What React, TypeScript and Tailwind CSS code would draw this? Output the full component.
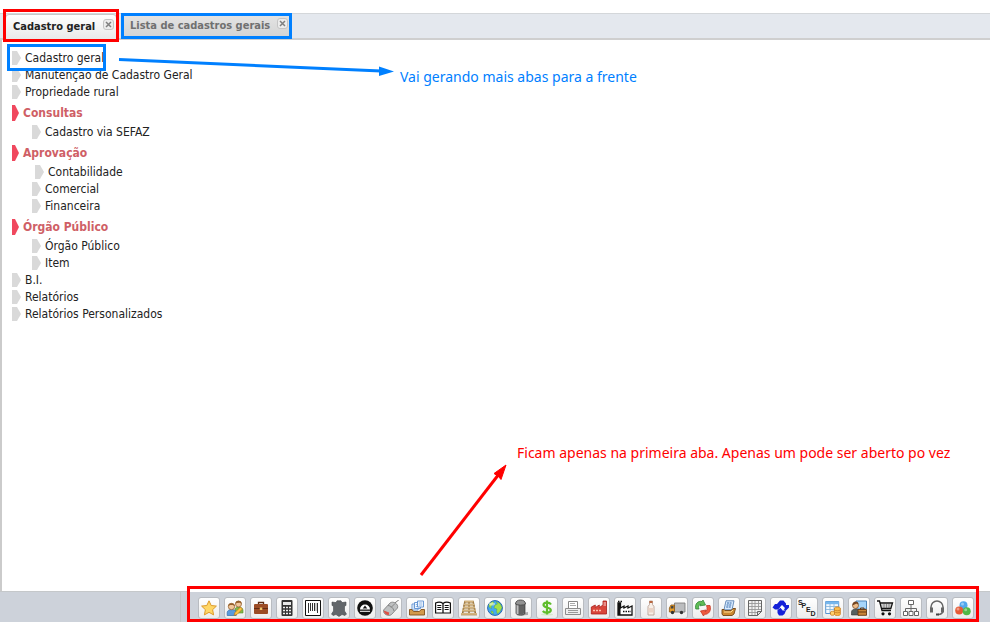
import type { ReactNode } from "react";

const uiFont = "font-['DejaVu_Sans_Condensed','DejaVu_Sans',sans-serif]";
const noteFont = "font-['Noto_Sans',sans-serif]";

type Tool = { label: string; icon: ReactNode };

const sheet = (x: number, y: number) => (
  <g key={x}>
    <path d={`M${x} ${y}h6v6h-6z`} fill="#f4f9ff" stroke="#5b8fd0" strokeWidth=".9" />
    <path d={`M${x + 1.3} ${y + 2}h3.5M${x + 1.3} ${y + 4}h3.5`} stroke="#7ba7dc" strokeWidth=".8" />
  </g>
);

const tools: Tool[] = [
  {
    label: "Favoritos",
    icon: <path d="M8 .8l2.200 4.700 5.200.6-3.800 3.600 1 5.200L8 12.300l-4.600 2.600 1-5.200L.6 6.100l5.200-.6z" fill="#ffd766" stroke="#dc9a2c" strokeWidth="1" />,
  },
  {
    label: "Cadastro geral",
    icon: (
      <>
        <path d="M8 9c1-3 7-3 8 1v3H8z" fill="#82b94a" stroke="#5a8c2c" strokeWidth=".6" />
        <circle cx="11.500" cy="4" r="3" fill="#f2c79b" stroke="#8a5522" strokeWidth=".7" />
        <path d="M8.400 4C8-.5 15-.5 14.600 4l-1.500-1.200-3.500.1z" fill="#94602c" />
        <path d="M.2 15.500v-3c0-4 9-4 9 0v3z" fill="#5a9add" stroke="#316da9" strokeWidth=".7" />
        <circle cx="4.500" cy="6.500" r="3.200" fill="#f2c79b" stroke="#8a5522" strokeWidth=".7" />
        <path d="M1.200 6.500C.6 2 8.200 2 7.800 6.500L6 5l-3 .1z" fill="#94602c" />
        <path d="M7 15.500l1-3L13.500 7l2 2-5.500 5.500z" fill="#ffc343" stroke="#ad6b16" strokeWidth=".6" />
      </>
    ),
  },
  {
    label: "Comercial",
    icon: (
      <>
        <path d="M5.500 4V2.500h5V4" fill="none" stroke="#5c2d14" strokeWidth="1.300" />
        <rect x="1" y="4" width="14" height="10" rx="1" fill="#9c4c25" />
        <path d="M1 8.500h14" stroke="#642b12" />
        <path d="M6.800 7.500h2.500V10H6.800z" fill="#efc66b" />
      </>
    ),
  },
  {
    label: "Calculadora",
    icon: (
      <>
        <rect x="2.500" y="0" width="11" height="16" rx="1" fill="#333" />
        <path d="M4 2h8v3H4z" fill="#e8e8e8" />
        <path d="M4 7.500h8M4 10.500h8M4 13.500h8" stroke="#eee" strokeWidth="1.700" strokeDasharray="2 1" />
      </>
    ),
  },
  {
    label: "Código de barras",
    icon: (
      <>
        <path d="M.5.5h15v15H.5z" fill="#fff" stroke="#111" />
        <path d="M3.500 3v10M5.500 3v8M7.500 3v8M9.500 3v8M12.500 3v10" stroke="#333" />
        <path d="M11 3v8" stroke="#999" />
      </>
    ),
  },
  {
    label: "Couro",
    icon: <path d="M1 2l4 .6L6 .8h4l1 1.800 4-.6v3.500l-1.500.5v5l2 3-1.500 1.500-3-1-3 2-3-2-3 1L.5 14l2-3V6L1 5.500z" fill="#62666a" stroke="#484c4f" strokeWidth=".6" />,
  },
  {
    label: "Balança",
    icon: (
      <>
        <circle cx="8" cy="8" r="7.800" fill="#111" />
        <path d="M3 9.500a5 5 0 0 1 10 0z" fill="#fff" />
        <path d="M5.700 8.500L8 5.500l2.300 3z" fill="#111" />
        <path d="M3 11.300h10" stroke="#fff" strokeWidth="1" />
      </>
    ),
  },
  {
    label: "Dispositivos",
    icon: (
      <>
        <path d="M.6 10L7 3c3-2.500 9 1 7.500 5L8.500 14.500c-3 2.500-9-.5-7.900-4.500z" fill="#bfc1c2" stroke="#777" strokeWidth=".8" />
        <path d="M5 5.500c2.500 0 5.500 2.500 6 5.500M8 7.500L12 3.500" fill="none" stroke="#777" strokeWidth=".8" />
        <path d="M12.500 3c0-2 2-1 3-3" fill="none" stroke="#777" />
        <path d="M.8 10.500c0 2.500 2.500 4.500 5 4.500l.3-2.500z" fill="#dc5146" />
      </>
    ),
  },
  {
    label: "Documentos",
    icon: (
      <>
        {sheet(3, 4)}
        {sheet(5.5, 2.5)}
        {sheet(8.5, 1)}
        <path d="M.5 9.500H3l1.500 2h6l1.500-2h3.500V15H.5z" fill="#d29a4c" stroke="#80501b" strokeWidth=".9" />
      </>
    ),
  },
  {
    label: "Livro",
    icon: (
      <>
        <path d="M.6 3C3 2 6 2 8 3.500 10 2 13 2 15.400 3v10H.6z" fill="#fff" stroke="#111" strokeWidth="1.200" />
        <path d="M8 3.500V13" stroke="#111" strokeWidth="1.300" />
        <path d="M2.300 5.500h4M2.300 7.500h4M2.300 9.500h4M9.700 5.500h4M9.700 7.500h4M9.700 9.500h4" stroke="#111" strokeWidth="1" />
      </>
    ),
  },
  {
    label: "Estoque",
    icon: (
      <>
        <path d="M4 1L1.500 14M8 1v13M12 1l2.500 13" stroke="#94713b" strokeWidth="1.500" />
        <path d="M3.500 1.500h9M3 4.500h10M2 7.500h12M1 10.500h14M0 14h16" stroke="#d3b47f" strokeWidth="1.800" />
        <path d="M3 2.700h10M2 5.700h12M1.500 8.700h13M1 11.700h14M0 15.200h16" stroke="#9c7940" strokeWidth=".5" />
      </>
    ),
  },
  {
    label: "Internet",
    icon: (
      <>
        <circle cx="8" cy="8" r="7.400" fill="#45a9ee" stroke="#2866b1" />
        <path d="M2 4l3.500-2.500 1.500 1-1 2-2 2 .5 2L2 7zM9 1.500l4 2 2 4-2 4-2.500 2.500-1-3 .5-2-3-1 1-3 2.500-1zM4 11l2 .5.5 2.500-2-1z" fill="#a5e04a" stroke="#458f26" strokeWidth=".3" />
        <ellipse cx="5" cy="4" rx="3" ry="1.500" fill="#fff" opacity=".5" />
      </>
    ),
  },
  {
    label: "Silo",
    icon: (
      <>
        <path d="M10 13l5-1v3l-7 .5z" fill="#aaa" />
        <path d="M3 3v10c0 3 9 3 9 0V3z" fill="#737373" stroke="#333" strokeWidth=".7" />
        <path d="M4.500 5v9" stroke="#c0c0c0" strokeWidth="1.800" />
        <path d="M7 5v9M9 5v9M11 5v8" stroke="#444" strokeWidth=".7" />
        <path d="M2.500 4c0-3 2.500-4 5-4s5 1 5 4c-1.500 1.500-8.500 1.500-10 0z" fill="#929292" stroke="#444" strokeWidth=".8" />
      </>
    ),
  },
  {
    label: "Financeiro",
    icon: (
      <>
        <ellipse cx="8" cy="14.500" rx="6" ry="1" fill="#d4e9cd" />
        <path d="M12 4.500C10.500 2 4.500 2 4.500 5s7.300 2 7.300 5-6 3.500-8 1M8 .5v14" fill="none" stroke="#60bd2c" strokeWidth="2.200" />
      </>
    ),
  },
  {
    label: "Impressão",
    icon: (
      <>
        <path d="M3.500 1.500h9v7h-9z" fill="#fff" stroke="#888" />
        <path d="M5 3.500h5M5 5.500h6" stroke="#aaa" />
        <path d="M.5 8.500h15v6H.5z" fill="#eee" stroke="#8c8c8c" />
        <path d="M3 10.500h10M3 12.500h10" stroke="#999" />
      </>
    ),
  },
  {
    label: "Indústria",
    icon: (
      <>
        <path d="M.3 14V7l4-2v2.500l4-2.500v2.500L12 5V1h3.500v13z" fill="#d9463b" stroke="#a8201b" strokeWidth=".8" />
        <path d="M2 10.500h9" stroke="#ffc3b1" strokeWidth="1.300" strokeDasharray="2 1" />
        <path d="M12.500 3h2.500M12.500 5h2.500" stroke="#fff" strokeWidth=".8" />
      </>
    ),
  },
  {
    label: "Produção",
    icon: (
      <>
        <path d="M1 15V3h2.500v5l3.500-2v2l4-2v2l4-2v9z" fill="#fff" stroke="#111" strokeWidth="1.300" />
        <path d="M1 1.500h4M6 11.500h8" stroke="#111" strokeWidth="1.500" strokeDasharray="1.500 1" fill="none" />
        <path d="M1 3h2.500v12H1z" fill="#111" />
      </>
    ),
  },
  {
    label: "Embalagem",
    icon: (
      <>
        <path d="M6.500 1h3v3.500l1.500 2V15H5V6.500l1.500-2z" fill="#f8eee6" stroke="#b9a295" strokeWidth=".9" />
        <path d="M6.500 1h3v2h-3z" fill="#b8663e" />
        <path d="M5.300 8h5.400v4.500H5.300z" fill="#ead3c6" />
      </>
    ),
  },
  {
    label: "Transporte",
    icon: (
      <>
        <path d="M5.500 3H16v9H5.500z" fill="#bcbdbf" stroke="#777" strokeWidth=".8" />
        <path d="M.4 12V8L2 5h3.500v7z" fill="#e69b27" stroke="#8c5816" strokeWidth=".8" />
        <path d="M2.300 6H4.500v2.500h-3z" fill="#444" />
        <circle cx="3.500" cy="12.500" r="1.700" fill="#333" />
        <circle cx="12.500" cy="12.500" r="1.700" fill="#333" />
      </>
    ),
  },
  {
    label: "Atualizar",
    icon: (
      <>
        <path d="M.8 9C-.5 4 3 .5 7 1.500L8 0l2.500 5-5.500.8 1-1.600C3.500 4.500 3 7 4 9z" fill="#5fbd55" stroke="#31883a" strokeWidth=".8" />
        <path d="M15 5.500c1.500 5-1 9-5.500 8.800L8.500 16 5.500 11l5.500-1-1 1.800c2-.3 2.700-3.300 1.500-6.300z" fill="#ef5b40" stroke="#c43b2a" strokeWidth=".8" />
      </>
    ),
  },
  {
    label: "Emissor fiscal",
    icon: (
      <>
        <path d="M5 .8h8l-2 9H3z" fill="#d9ebff" stroke="#5b83b3" strokeWidth=".9" />
        <path d="M6 3h5M5.600 5h5M5.200 7h5" stroke="#3569a8" strokeDasharray="2 .6" />
        <path d="M1 9.500h2l1 1h6l2-2h2.500L13 14l-2 1.500H2L1 14z" fill="#cc8a32" stroke="#704414" strokeWidth=".9" />
        <path d="M3 12h7l2-2" fill="none" stroke="#ffdb93" />
      </>
    ),
  },
  {
    label: "Planilha",
    icon: (
      <>
        <path d="M1.500.5h13v11l-4 4h-9z" fill="#f2f2f2" stroke="#666" />
        <path d="M2 3.500h12M2 6.500h12M2 9.500h12M2 12.500h8M5 1v14M8 1v14M11.500 1v9" stroke="#999" strokeWidth=".9" />
        <path d="M10.500 15.500v-4h4z" fill="#ddd" stroke="#666" />
      </>
    ),
  },
  {
    label: "Integração",
    icon: (
      <>
        <path d="M4 4l3-3.500h3.500L13 3.500V5h3v2.500L12.500 11 11 9.500 12 8 9 5 6.500 8 5 9.500H2L-.5 7.500 2 4z" fill="#1521d8" />
        <path d="M4.500 10L8 7.500l1.500 3H13l-1.500 3.500-2 1.500H6L4.500 13z" fill="#1521d8" />
        <path d="M7 7.200l2-1.700 2 2.300-2 1.700z" fill="#fff" />
      </>
    ),
  },
  {
    label: "SPED",
    icon: (
      <g fill="#222" fontFamily="Liberation Sans, sans-serif" fontSize="7" fontWeight="700">
        <text x="-1" y="5">S</text>
        <text x="2.500" y="8">P</text>
        <text x="7" y="12">E</text>
        <text x="11.500" y="15.500">D</text>
      </g>
    ),
  },
  {
    label: "Tabela de preços",
    icon: (
      <>
        <path d="M.7 1.500h13v12H.7z" fill="#f4f9ff" stroke="#5996d1" />
        <path d="M.7 1.500h13v2.700H.7z" fill="#77b7ed" />
        <path d="M1 6.500h12M1 9.500h12M5 4v9M9 4v9" stroke="#8bb8dd" strokeWidth=".9" />
        <path d="M9.500 8c0-1.500 5.800-1.500 5.800 0v6.500c0 1.300-5.800 1.300-5.800 0z" fill="#f9bc4d" stroke="#c67a20" strokeWidth=".8" />
        <path d="M9.500 10c1 1 5 1 5.800 0M9.500 12c1 1 5 1 5.800 0" fill="none" stroke="#c67a20" strokeWidth=".8" />
        <path d="M5.500 12c0-1 4-1 4 0v2.500c0 1-4 1-4 0z" fill="#ffd06d" stroke="#c67a20" strokeWidth=".8" />
      </>
    ),
  },
  {
    label: "Recursos humanos",
    icon: (
      <>
        <path d="M5 1h10.500v8H5z" fill="#a6d5fa" stroke="#4e86ba" />
        <path d="M.5 15v-3c0-4 8-4 8 0v3z" fill="#55605f" stroke="#333" strokeWidth=".6" />
        <circle cx="4.500" cy="5.500" r="3" fill="#edbb87" stroke="#724522" strokeWidth=".7" />
        <path d="M1.500 5.500c-.5-5 6.500-5 6-1L5.500 3.500z" fill="#724522" />
        <path d="M7 9.500h8.500v5.800H7z" fill="#c98537" stroke="#65370f" strokeWidth=".9" />
        <path d="M9.500 9.500v-1.500h3.500v1.500M7 12h8.500" fill="none" stroke="#65370f" />
      </>
    ),
  },
  {
    label: "Compras",
    icon: (
      <>
        <path d="M0 1h2.500l2.500 9.500h9M3.500 3h12l-1.700 5.500H4.800" fill="none" stroke="#111" strokeWidth="1.300" />
        <path d="M4 5h11M4.500 7h10M7 3v5.500M9.500 3v5.500M12 3v5.500" stroke="#444" strokeWidth=".5" />
        <circle cx="6" cy="13.800" r="1.600" fill="#111" />
        <circle cx="12.500" cy="13.800" r="1.600" fill="#111" />
      </>
    ),
  },
  {
    label: "Organograma",
    icon: (
      <g fill="#fff" stroke="#666">
        <path d="M8 5v6M2.500 11V8.500h11V11" fill="none" />
        <path d="M5.500.5h5v4h-5zM.5 11.500h4v4h-4zM6 11.500h4v4H6zM11.500 11.500h4v4h-4z" />
      </g>
    ),
  },
  {
    label: "Suporte",
    icon: (
      <>
        <path d="M2 9V7a6 6 0 0 1 12 0v3c0 3-2 4.500-5 4.500" fill="none" stroke="#666" strokeWidth="1.500" />
        <path d="M1 7.500h3v5H1zM12 7.500h3v5h-3z" fill="#666" />
        <path d="M7 14.500h3" stroke="#444" strokeWidth="2" />
      </>
    ),
  },
  {
    label: "Módulos",
    icon: (
      <>
        <circle cx="8.500" cy="5.300" r="4" fill="#52a7ed" />
        <circle cx="4.200" cy="10.500" r="4" fill="#e65b36" />
        <circle cx="11.700" cy="11.200" r="4" fill="#50b947" />
        <g fill="#fff" opacity=".4">
          <circle cx="7.500" cy="4" r="1.500" />
          <circle cx="3" cy="9" r="1.500" />
          <circle cx="10.700" cy="9.800" r="1.500" />
        </g>
      </>
    ),
  },
];

function CloseIcon({ label }: { label: string }) {
  return (
    <button type="button" aria-label={label} className="flex size-[11px] shrink-0 items-center justify-center rounded-[3px] border border-[#c4c4c4] bg-[#ececec]">
      <svg viewBox="0 0 7 7" className="size-[7px]">
        <path d="M1 1l5 5M6 1L1 6" stroke="#808080" strokeWidth="1.500" />
      </svg>
    </button>
  );
}

function Marker({ active = false }: { active?: boolean }) {
  return active ? (
    <svg viewBox="0 0 7 16" className="h-4 w-[7px] shrink-0">
      <path d="M0 0h3l4 8-4 8H0z" fill="#f0485e" />
    </svg>
  ) : (
    <svg viewBox="0 0 9 14" className="h-[14px] w-[9px] shrink-0">
      <path d="M0 0h5l4 7-4 7H0z" fill="#d9d9d9" />
    </svg>
  );
}

function Item({ children, className = "" }: { children: ReactNode; className?: string }) {
  return (
    <li className={`flex h-[17px] ${className}`}>
      <a href="#" className="relative flex items-center gap-1 whitespace-nowrap">
        <Marker />
        {children}
      </a>
    </li>
  );
}

function Section({ title, children }: { title: string; children: ReactNode }) {
  return (
    <li>
      <h2 className="flex h-[23px] items-center gap-1 pt-[3px] text-xs font-bold text-[#cf5f66]">
        <Marker active />
        {title}
      </h2>
      <ul className="pl-5">{children}</ul>
    </li>
  );
}

export default function App() {
  return (
    <div className={`relative flex min-h-screen flex-col bg-white pt-[13px] text-xs text-[#222] ${uiFont}`}>
      <header className="flex h-[27px] items-start gap-[5px] border-t border-b-2 border-t-[#d4d7da] border-b-[#cfcfcf] bg-[#e4e8ee] pl-[5px] text-[11px] leading-4">
        <div className="relative flex h-[26px] w-28 justify-between rounded-t border border-[#c8c8c8] bg-linear-to-b from-white to-[#e9e9e9] pt-1 pr-[2px] pl-[7px]">
          <button type="button" className="h-4 font-bold whitespace-nowrap text-[#222]">Cadastro geral</button>
          <CloseIcon label="Fechar Cadastro geral" />
          <span className="pointer-events-none absolute -inset-x-[3px] -top-[6px] -bottom-[3px] border-3 border-[#f00]" />
        </div>
        <div className="relative flex h-[22px] w-[169px] justify-between bg-linear-to-b from-[#e4e4e4] to-[#d5d5d5] pt-1 pr-[3px] pl-2">
          <button type="button" className="h-4 font-bold whitespace-nowrap text-[#707070]">Lista de cadastros gerais</button>
          <CloseIcon label="Fechar Lista de cadastros gerais" />
          <span className="pointer-events-none absolute -inset-x-px -top-px -bottom-[3px] border-3 border-[#0080ff]" />
        </div>
      </header>

      <main className="grow border-l-2 border-[#cbcbcb] pt-[9px] pl-[10px]">
        <ul>
          <Item>
            Cadastro geral
            <span className="pointer-events-none absolute -top-[5px] -right-[2px] -bottom-[5px] -left-[5px] z-10 border-3 border-[#0080ff]" />
          </Item>
          <Item>Manutenção de Cadastro Geral</Item>
          <Item>Propriedade rural</Item>
          <Section title="Consultas">
            <Item>Cadastro via SEFAZ</Item>
          </Section>
          <Section title="Aprovação">
            <Item className="pl-[3px]">Contabilidade</Item>
            <Item>Comercial</Item>
            <Item>Financeira</Item>
          </Section>
          <Section title="Órgão Público">
            <Item>Órgão Público</Item>
            <Item>Item</Item>
          </Section>
          <Item>B.I.</Item>
          <Item>Relatórios</Item>
          <Item>Relatórios Personalizados</Item>
        </ul>
      </main>

      <footer className="flex h-[31px] justify-end border-t border-[#c5c8ca] bg-[#cdd2da] pr-[11px]">
        <div className="relative border-l border-[#c4c7ca] pt-[5px] pr-[5px] pl-[17px]">
          <nav aria-label="Módulos" className="flex gap-1">
            {tools.map((tool) => (
              <button
                key={tool.label}
                type="button"
                title={tool.label}
                aria-label={tool.label}
                className="flex size-[22px] items-center justify-center rounded-[3px] border border-[#b9bcc1] bg-linear-to-b from-white to-[#ededed]"
              >
                <svg viewBox="0 0 16 16" className="size-4 overflow-visible">{tool.icon}</svg>
              </button>
            ))}
          </nav>
          <span className="pointer-events-none absolute -top-[6px] right-0 bottom-0 left-[6px] border-3 border-[#f00]" />
          <span className="pointer-events-none absolute -top-[3px] right-[3px] left-[9px] h-[3px] bg-white" />
        </div>
      </footer>

      <svg viewBox="0 0 990 622" className="pointer-events-none absolute top-0 left-0 h-[622px] w-[990px]">
        <path d="M119 59.500L381 71" stroke="#0080ff" strokeWidth="3" />
        <path d="M379 66.500l15 5-15 4.500z" fill="#0080ff" />
        <path d="M421 575l78-101" stroke="#f00" strokeWidth="3" />
        <path d="M506 465l-5 14.500-2.500-3-4.500-3z" fill="#f00" stroke="#f00" />
      </svg>
      <p className={`absolute top-[68px] left-[400px] text-[14px] leading-[18px] whitespace-nowrap text-[#0080ff] ${noteFont}`}>
        Vai gerando mais abas para a frente
      </p>
      <p className={`absolute top-[444px] left-[517px] text-[14px] leading-[18px] whitespace-nowrap text-[#f00] ${noteFont}`}>
        Ficam apenas na primeira aba. Apenas um pode ser aberto po vez
      </p>
    </div>
  );
}
